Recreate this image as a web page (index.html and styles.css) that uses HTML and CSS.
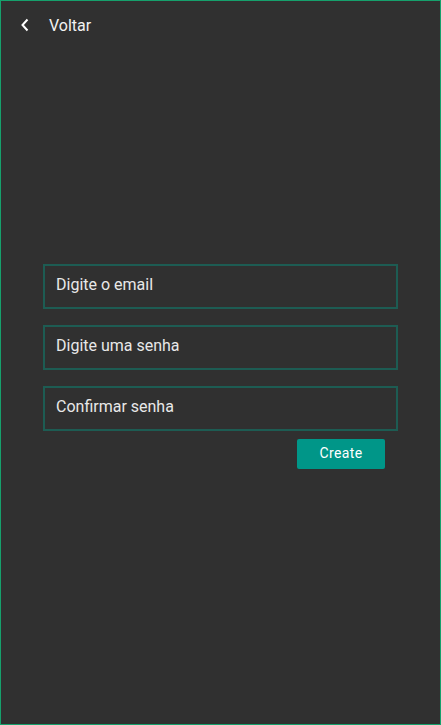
FILE: index.html
```html
<!DOCTYPE html>
<html>
<head>
<meta charset="utf-8">
<link rel="stylesheet" href="styles.css">
</head>
<body>
<div class="screen">
  <header class="topbar">
    <svg class="back" width="10" height="14" viewBox="0 0 10 14"><path d="M7.5 1.5 L2.5 7 L7.5 12.5" fill="none" stroke="#ffffff" stroke-width="2"/></svg>
    <span class="title">Voltar</span>
  </header>
  <main class="form">
    <div class="field">Digite o email</div>
    <div class="field">Digite uma senha</div>
    <div class="field">Confirmar senha</div>
    <div class="actions"><button class="btn">Create</button></div>
  </main>
</div>
</body>
</html>
```
FILE: styles.css
```css
html, body { margin: 0; padding: 0; background: #303030; }
.screen {
  box-sizing: border-box;
  width: 441px;
  height: 725px;
  border: 1px solid #16a06c;
  background: #303030;
  font-family: Roboto, "Liberation Sans", sans-serif;
  display: flex;
  flex-direction: column;
}
.topbar {
  height: 48px;
  display: flex;
  align-items: center;
  padding-left: 19px;
}
.back { display: block; }
.title {
  color: #f2f2f2;
  font-size: 16px;
  margin-left: 19px;
}
.form {
  margin-top: 215px;
  margin-left: 42px;
  width: 355px;
  display: flex;
  flex-direction: column;
  gap: 16px;
}
.field {
  box-sizing: border-box;
  height: 45px;
  border: 2px solid #1d5c53;
  color: #e8e8e8;
  font-size: 16px;
  padding-left: 11px;
  display: flex;
  align-items: center;
  padding-bottom: 5px;
}
.actions {
  display: flex;
  justify-content: flex-end;
  margin-top: -8px;
  padding-right: 13px;
}
.btn {
  width: 88px;
  height: 30px;
  background: #009688;
  color: #ffffff;
  border: none;
  border-radius: 2px;
  font-family: Roboto, "Liberation Sans", sans-serif;
  font-size: 14px;
  letter-spacing: 0.4px;
  padding: 0 0 3px 0;
}
```
